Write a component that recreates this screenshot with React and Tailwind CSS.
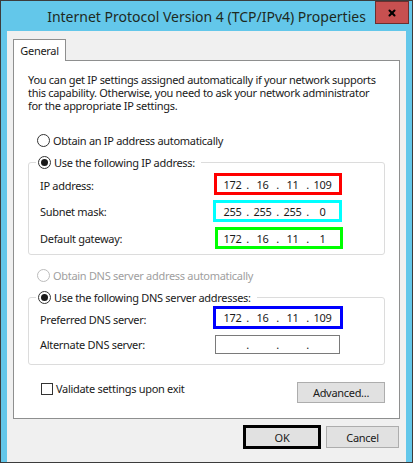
import { X } from "lucide-react";

function Radio({ checked, disabled }) {
  return (
    <span
      className={`flex h-[13px] w-[13px] shrink-0 items-center justify-center rounded-full border bg-white ${
        disabled ? "border-[#bcbcbc]" : "border-[#333333]"
      }`}
    >
      {checked && <span className="h-[7px] w-[7px] rounded-full bg-[#1a1a1a]" />}
    </span>
  );
}

function IpBox({ octets, color, className = "" }) {
  const boxColor = {
    red: "border-[3px] border-[#ff0000]",
    cyan: "border-[3px] border-[#00ffff]",
    green: "border-[3px] border-[#00ff00]",
    blue: "border-[3px] border-[#0000ff]",
    none: "border border-[#7a7a7a]",
  }[color];
  return (
    <div className={`flex items-center bg-white ${boxColor} ${className}`}>
      {octets.map((o, i) => (
        <div key={i} className="flex">
          {i > 0 && <span className="w-[7px] text-center">.</span>}
          <span className="w-[23px] text-center">{o}</span>
        </div>
      ))}
    </div>
  );
}

export default function App() {
  return (
    <div className="relative flex h-[463px] w-[413px] flex-col border border-[#3c3c3c] bg-[#63c7ea] font-['Noto_Sans',sans-serif] text-[11px] leading-[13px] tracking-[-0.3px] text-[#1a1a1a]">
      {/* Title bar */}
      <div className="flex h-[30px] shrink-0 items-center justify-center text-[14px] tracking-normal text-[#1e2a1e]">
        Internet Protocol Version 4 (TCP/IPv4) Properties
      </div>
      <button className="absolute right-[3px] top-0 flex h-[23px] w-[34px] items-center justify-center border border-[#6b2f2f] bg-[#c75050]">
        <X className="h-[10px] w-[10px] text-black" strokeWidth={5} />
      </button>

      {/* Content */}
      <div className="mx-[6px] flex flex-1 flex-col bg-[#f0f0f0] px-[6px] pb-[5px] pt-[8px]">
        {/* Tab */}
        <div className="relative z-10 -mb-px flex h-[22px] w-[53px] items-center justify-center border border-b-0 border-[#8e8f8f] bg-white">
          General
        </div>

        {/* Panel */}
        <div className="flex h-[359px] flex-col border border-[#8e8f8f] bg-white">
          <div className="whitespace-nowrap pl-[14px] pt-[12px]">
            <div>You can get IP settings assigned automatically if your network supports</div>
            <div>this capability. Otherwise, you need to ask your network administrator</div>
            <div>for the appropriate IP settings.</div>
          </div>

          <div className="mt-[20px] flex h-[16px] items-center gap-[3px] pl-[23px]">
            <Radio />
            <span>Obtain an IP address automatically</span>
          </div>

          <fieldset className="mx-[14px] mt-[6px] rounded-[3px] border border-[#dcdcdc] pb-[5px] pl-[11px]">
            <legend className="ml-[-4px] flex h-[16px] items-center gap-[3px] bg-white pl-[2px] pr-[6px]">
              <Radio checked />
              <span>Use the following IP address:</span>
            </legend>
            <div className="mt-[3px] flex flex-col gap-[5px]">
              <div className="flex h-[22px] items-center">
                <span className="w-[174px] pt-[3px]">IP address:</span>
                <IpBox octets={["172", "16", "11", "109"]} color="red" className="h-[22px] w-[128px] pl-[4px]" />
              </div>
              <div className="flex h-[22px] items-center">
                <span className="w-[173px]">Subnet mask:</span>
                <IpBox octets={["255", "255", "255", "0"]} color="cyan" className="h-[22px] w-[129px] pl-[5px]" />
              </div>
              <div className="flex h-[22px] items-center">
                <span className="w-[175px]">Default gateway:</span>
                <IpBox octets={["172", "16", "11", "1"]} color="green" className="h-[22px] w-[128px] pl-[3px]" />
              </div>
            </div>
          </fieldset>

          <div className="mt-[12px] flex h-[16px] items-center gap-[3px] pl-[23px] text-[#a0a0a0]">
            <Radio disabled />
            <span>Obtain DNS server address automatically</span>
          </div>

          <fieldset className="mx-[14px] mt-[6px] rounded-[3px] border border-[#dcdcdc] pb-[9px] pl-[11px]">
            <legend className="ml-[-4px] flex h-[16px] items-center gap-[3px] bg-white pl-[2px] pr-[6px]">
              <Radio checked />
              <span>Use the following DNS server addresses:</span>
            </legend>
            <div className="mt-[1px] flex flex-col gap-[5px]">
              <div className="flex h-[23px] items-center">
                <span className="w-[173px] pt-[3px]">Preferred DNS server:</span>
                <IpBox octets={["172", "16", "11", "109"]} color="blue" className="h-[23px] w-[130px] pl-[5px]" />
              </div>
              <div className="flex h-[21px] items-center">
                <span className="w-[175px]">Alternate DNS server:</span>
                <IpBox octets={["", "", "", ""]} color="none" className="h-[19px] w-[125px] pl-[5px]" />
              </div>
            </div>
          </fieldset>

          <div className="mt-[17px] flex items-start justify-between pl-[27px] pr-[14px]">
            <div className="flex items-center gap-[3px]">
              <span className="h-[12px] w-[12px] border border-[#333333] bg-white" />
              <span>Validate settings upon exit</span>
            </div>
            <button className="h-[21px] w-[88px] border border-[#adadad] bg-[#e1e1e1]">Advanced...</button>
          </div>
        </div>

        {/* Buttons */}
        <div className="mt-[6px] flex items-center justify-end gap-[5px] pr-[1px]">
          <button className="h-[24px] w-[78px] border-[3px] border-black bg-[#e1e1e1]">OK</button>
          <button className="h-[22px] w-[73px] border border-[#adadad] bg-[#e1e1e1]">Cancel</button>
        </div>
      </div>
    </div>
  );
}
